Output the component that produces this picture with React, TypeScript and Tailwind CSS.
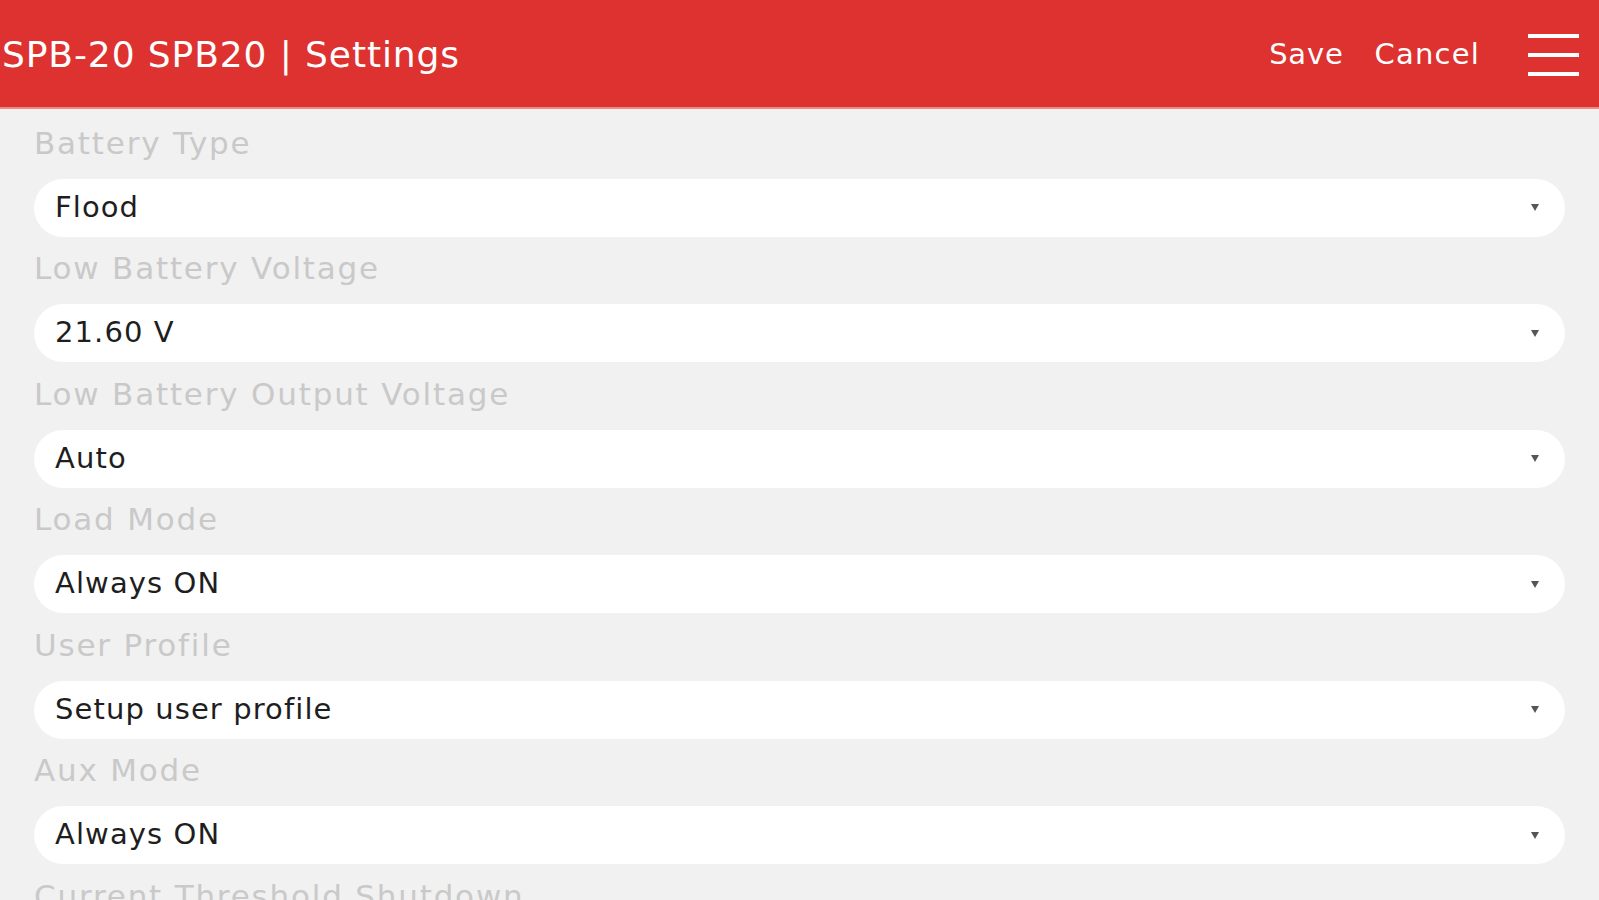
const fields = [
  { label: "Battery Type", value: "Flood" },
  { label: "Low Battery Voltage", value: "21.60 V" },
  { label: "Low Battery Output Voltage", value: "Auto" },
  { label: "Load Mode", value: "Always ON" },
  { label: "User Profile", value: "Setup user profile" },
  { label: "Aux Mode", value: "Always ON" },
  { label: "Current Threshold Shutdown", value: "Off" },
];

function SelectRow({ label, value }: { label: string; value: string }) {
  return (
    <div>
      <div className="h-[67.5px] flex items-center pb-[4px] pl-[34px] text-[31px] tracking-[1.8px] text-[#c9c9c9]">{label}</div>
      <div className="mx-[34px] h-[58px] bg-white rounded-full flex items-center justify-between pl-[21px] pr-[26px]">
        <span className="text-[29px] tracking-[1.1px] text-[#1e1e1e]">{value}</span>
        <svg width="8" height="7" viewBox="0 0 8 7" className="text-[#555]">
          <path d="M0 0 L8 0 L4 7 Z" fill="currentColor" />
        </svg>
      </div>
    </div>
  );
}

export default function App() {
  return (
    <div className="h-[900px] overflow-hidden bg-[#f1f1f1]" style={{ fontFamily: '"DejaVu Sans", Arial, sans-serif' }}>
      <header className="h-[109px] bg-[#dd322f] border-b-2 border-[#ec8a88] flex items-center justify-between pl-[2px] pr-[20px] text-white">
        <h1 className="text-[36px] tracking-[0.9px] pt-[2px]">SPB-20 SPB20 | Settings</h1>
        <div className="flex items-center pt-[2px]">
          <button className="text-[29px] tracking-[0.8px] mr-[31px]">Save</button>
          <button className="text-[29px] tracking-[1.2px] mr-[48px]">Cancel</button>
          <div className="flex flex-col gap-[15px] w-[51px]">
            <span className="h-[4px] bg-white" />
            <span className="h-[4px] bg-white" />
            <span className="h-[4px] bg-white" />
          </div>
        </div>
      </header>
      <main className="pt-[2px]">
        {fields.map((f) => (
          <SelectRow key={f.label} label={f.label} value={f.value} />
        ))}
      </main>
    </div>
  );
}
